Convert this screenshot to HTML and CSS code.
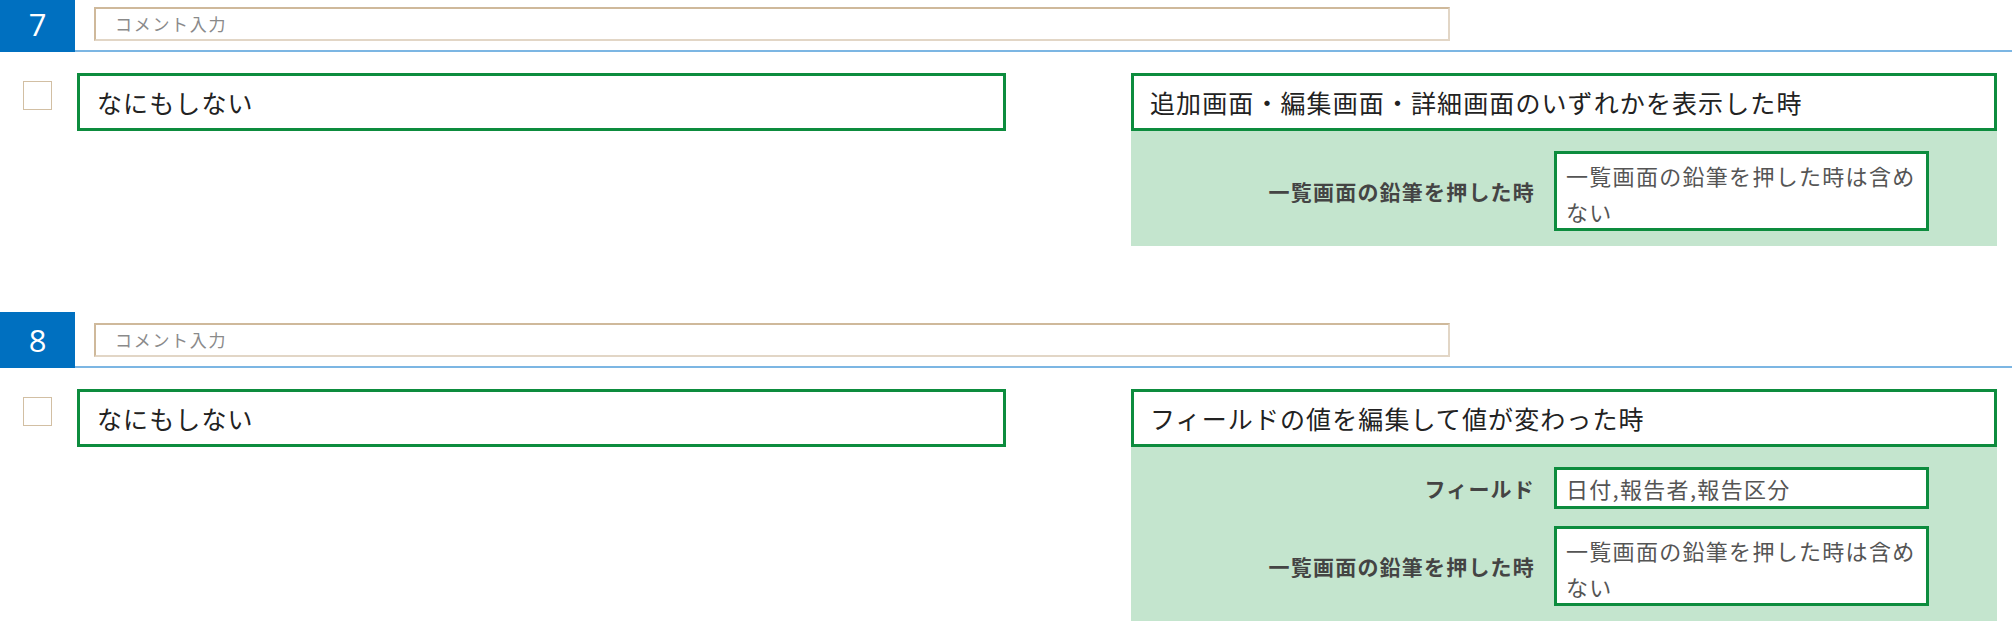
FILE: index.html
```html
<!DOCTYPE html>
<html lang="ja">
<head>
<meta charset="utf-8">
<title>アクション設定</title>
<link rel="stylesheet" href="styles.css">
</head>
<body>
<div class="page">
  <section class="item">
    <div class="head">
      <div class="num">7</div>
      <div class="comment">コメント入力</div>
    </div>
    <div class="body">
      <div class="check"></div>
      <div class="action">なにもしない</div>
      <div class="trigger">
        <div class="title">追加画面・編集画面・詳細画面のいずれかを表示した時</div>
        <div class="panel">
          <div class="row">
            <div class="label">一覧画面の鉛筆を押した時</div>
            <div class="field multi">一覧画面の鉛筆を押した時は含めない</div>
          </div>
        </div>
      </div>
    </div>
  </section>
  <section class="item">
    <div class="head">
      <div class="num">8</div>
      <div class="comment">コメント入力</div>
    </div>
    <div class="body">
      <div class="check"></div>
      <div class="action">なにもしない</div>
      <div class="trigger">
        <div class="title">フィールドの値を編集して値が変わった時</div>
        <div class="panel">
          <div class="row">
            <div class="label">フィールド</div>
            <div class="field single">日付,報告者,報告区分</div>
          </div>
          <div class="row">
            <div class="label">一覧画面の鉛筆を押した時</div>
            <div class="field multi">一覧画面の鉛筆を押した時は含めない</div>
          </div>
        </div>
      </div>
    </div>
  </section>
</div>
</body>
</html>
```

FILE: styles.css
```css
* { box-sizing: border-box; }
html, body { margin: 0; padding: 0; background: #fff; }
body {
  font-family: "Noto Sans CJK JP", "Noto Sans", sans-serif;
  color: #222;
  overflow: hidden;
}
.page { margin-top: -4px; }
.item { margin-bottom: 66px; }
.item:last-child { margin-bottom: 0; }

.head {
  display: flex;
  align-items: flex-start;
  height: 56px;
  border-bottom: 2px solid #7cb6e3;
}
.num {
  width: 75px;
  height: 56px;
  flex: none;
  background: #0070c0;
  color: #fff;
  font-family: "Open Sans", "Noto Sans", sans-serif;
  font-size: 31px;
  line-height: 56px;
  text-align: center;
}
.comment {
  margin-left: 19px;
  margin-top: 11px;
  width: 1356px;
  height: 34px;
  border: 2px solid #e2d6c6;
  border-top-color: #cfb99b;
  border-left-color: #cfb99b;
  padding-left: 19px;
  font-size: 17px;
  letter-spacing: 1.7px;
  line-height: 29px;
  color: #8a8a8a;
}

.body {
  display: flex;
  align-items: flex-start;
  margin-top: 21px;
}
.check {
  flex: none;
  margin-left: 23px;
  margin-top: 8px;
  width: 29px;
  height: 29px;
  border: 1px solid #d2bfa3;
  background: #fff;
}
.action, .title {
  height: 58px;
  border: 3px solid #0d8c3e;
  padding-left: 17px;
  display: flex;
  align-items: center;
  font-size: 25px;
  letter-spacing: 1.1px;
  color: #222;
  background: #fff;
}
.action {
  flex: none;
  margin-left: 25px;
  width: 929px;
}
.trigger {
  flex: none;
  margin-left: 125px;
  width: 866px;
}
.title { padding-left: 16px; }
.panel {
  background: #c4e5ce;
  padding: 20px 68px 15px 0;
  display: flex;
  flex-direction: column;
  gap: 17px;
}
.row {
  display: flex;
  align-items: center;
  gap: 19px;
}
.label {
  flex: 1;
  text-align: right;
  font-size: 21px;
  font-weight: bold;
  letter-spacing: 1.2px;
  color: #444;
}
.field {
  flex: none;
  width: 375px;
  border: 3px solid #0d8c3e;
  background: #fff;
  padding: 0 2px 0 9px;
  font-size: 22px;
  letter-spacing: 1.3px;
  color: #555;
}
.single {
  height: 42px;
  line-height: 36px;
  word-spacing: 4px;
}
.multi {
  height: 80px;
  padding-top: 3px;
  line-height: 36px;
}
```
